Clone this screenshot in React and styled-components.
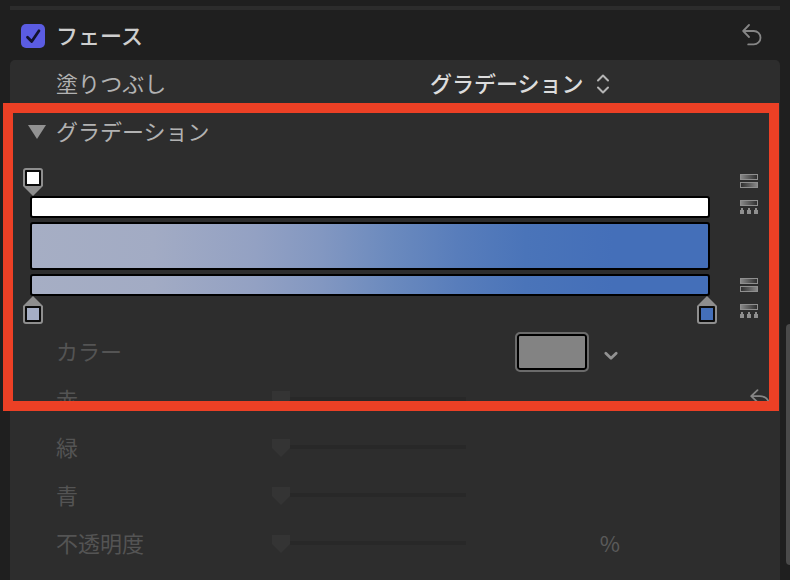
import { useState } from "react";
import styled, { createGlobalStyle } from "styled-components";

const CHANNELS = [
  { id: "green", label: "緑" },
  { id: "blue", label: "青" },
  { id: "opacity", label: "不透明度", unit: "%" },
];

export default function App() {
  const [faceOn, setFaceOn] = useState(true);
  const [fill, setFill] = useState("gradient");

  return (
    <>
      <GlobalStyle />
      <Inspector>
        <Divider />
        <Header>
          <CheckLabel>
            <CheckWrap>
              <Checkbox
                type="checkbox"
                checked={faceOn}
                onChange={(e) => setFaceOn(e.target.checked)}
              />
              {faceOn && <CheckMark />}
            </CheckWrap>
            <LabelText>フェース</LabelText>
          </CheckLabel>
          <IconButton aria-label="フェースをリセット">
            <ResetIcon />
          </IconButton>
        </Header>
        <Panel>
          <Row>
            <Label htmlFor="fill">塗りつぶし</Label>
            <Control $align="flex-end" $inset="8px">
              <SelectWrap>
                <Select
                  id="fill"
                  value={fill}
                  onChange={(e) => setFill(e.target.value)}
                >
                  <option value="gradient">グラデーション</option>
                </Select>
                <UpDownIcon />
              </SelectWrap>
            </Control>
          </Row>
          <Section>
            <Disclosure aria-expanded="true">
              <svg width="18" height="14" viewBox="0 0 18 14">
                <path d="M0 0h18L9 14z" fill="#929292" />
              </svg>
              <LabelText>グラデーション</LabelText>
            </Disclosure>
            <GradientEditor />
            <Row>
              <Label as="span" $dim>
                カラー
              </Label>
              <Control $align="flex-end" $gap="14px" $inset="1px">
                <Swatch aria-label="カラー" />
                <IconButton aria-label="カラーを展開">
                  <svg width="16" height="20" viewBox="0 0 16 20" fill="none">
                    <path
                      d="M2.8 11.3l5.2 5 5.2-5"
                      stroke="#929292"
                      strokeWidth="2.8"
                      strokeLinecap="round"
                      strokeLinejoin="round"
                    />
                  </svg>
                </IconButton>
              </Control>
            </Row>
            <ChannelRow id="red" label="赤">
              <IconButton aria-label="赤をリセット">
                <UndoIcon />
              </IconButton>
            </ChannelRow>
            <Highlight />
          </Section>
          {CHANNELS.map((channel) => (
            <ChannelRow key={channel.id} {...channel} />
          ))}
        </Panel>
        <ScrollThumb />
      </Inspector>
    </>
  );
}

function ChannelRow({ id, label, unit, children }) {
  return (
    <Row>
      <Label htmlFor={id} $dim>
        {label}
      </Label>
      <Control $align="space-between">
        <Slider id={id} type="range" min="0" max="100" defaultValue="0" disabled />
        {unit && <Unit>{unit}</Unit>}
      </Control>
      <Trailing>{children}</Trailing>
    </Row>
  );
}

function GradientEditor() {
  return (
    <Editor>
      <Tracks>
        <Stops>
          <Stop $color="#ffffff" aria-label="不透明度の分岐点" />
        </Stops>
        <Bar />
        <Bar $tall $gradient />
        <Bar $gradient />
        <Stops>
          <Stop $up $color="#a5aec5" aria-label="開始カラー" />
          <Stop $up $color="#446fb9" aria-label="終了カラー" />
        </Stops>
      </Tracks>
      <Tools>
        <ToolGroup>
          <IconButton aria-label="不透明度を反転">
            <ReverseIcon id="reverse-opacity" />
          </IconButton>
          <IconButton aria-label="不透明度を均等に配置">
            <DistributeIcon id="spread-opacity" />
          </IconButton>
        </ToolGroup>
        <ToolGroup>
          <IconButton aria-label="カラーを反転">
            <ReverseIcon id="reverse-color" />
          </IconButton>
          <IconButton aria-label="カラーを均等に配置">
            <DistributeIcon id="spread-color" />
          </IconButton>
        </ToolGroup>
      </Tools>
    </Editor>
  );
}

function CheckMark() {
  return (
    <svg width="24" height="24" viewBox="0 0 24 24" fill="none">
      <path
        d="M6.5 13.2l4.2 4.3L18 6.8"
        stroke="#13132e"
        strokeWidth="2.8"
        strokeLinecap="round"
        strokeLinejoin="round"
      />
    </svg>
  );
}

function ResetIcon() {
  return (
    <svg width="20" height="24" viewBox="0 0 20 24" fill="none">
      <path
        d="M7 1L1.2 7 7 13M1.5 7h10.3a6.7 6.7 0 0 1 0 13.4H6.2"
        stroke="#868686"
        strokeWidth="1.8"
        strokeLinecap="round"
        strokeLinejoin="round"
      />
    </svg>
  );
}

function UndoIcon() {
  return (
    <svg width="20" height="24" viewBox="0 0 20 24" fill="none">
      <path
        d="M7.5 2.2L1.2 8.2l6.3 6M1.5 8.2h8.3c4.6 0 8 2.2 9 6.6"
        stroke="#868686"
        strokeWidth="1.8"
        strokeLinecap="round"
        strokeLinejoin="round"
      />
    </svg>
  );
}

function UpDownIcon() {
  return (
    <svg width="14" height="20" viewBox="0 0 14 20" fill="none">
      <path
        d="M2 6.5l5-5 5 5M2 13.5l5 5 5-5"
        stroke="#b4b4b4"
        strokeWidth="2"
        strokeLinecap="round"
        strokeLinejoin="round"
      />
    </svg>
  );
}

function ReverseIcon({ id }) {
  return (
    <svg width="18" height="14" viewBox="0 0 18 14">
      <linearGradient id={`${id}-a`}>
        <stop offset="0" stopColor="#8a8a8a" />
        <stop offset="1" stopColor="#2d2d2d" />
      </linearGradient>
      <linearGradient id={`${id}-b`}>
        <stop offset="0" stopColor="#2d2d2d" />
        <stop offset="1" stopColor="#8a8a8a" />
      </linearGradient>
      <rect x="0.5" y="0.5" width="17" height="5" fill={`url(#${id}-a)`} stroke="#8f8f8f" />
      <rect x="0.5" y="8.5" width="17" height="5" fill={`url(#${id}-b)`} stroke="#8f8f8f" />
    </svg>
  );
}

function DistributeIcon({ id }) {
  return (
    <svg width="18" height="14" viewBox="0 0 18 14">
      <linearGradient id={id}>
        <stop offset="0" stopColor="#8a8a8a" />
        <stop offset="1" stopColor="#2d2d2d" />
      </linearGradient>
      <rect x="0.5" y="0.5" width="17" height="5" fill={`url(#${id})`} stroke="#8f8f8f" />
      <path
        d="M0 14v-4h1V8h2v2h1v4zM7 14v-4h1V8h2v2h1v4zM14 14v-4h1V8h2v2h1v4z"
        fill="#8f8f8f"
      />
    </svg>
  );
}

const GlobalStyle = createGlobalStyle`
  *,
  *::before {
    box-sizing: border-box;
  }
  body {
    margin: 0;
    background: #1f1f1f;
    color: #b2b2b2;
    font: 22px/32px "Noto Sans CJK JP", sans-serif;
  }
  svg {
    display: block;
  }
  button {
    margin: 0;
    padding: 0;
    border: 0;
    background: none;
    color: inherit;
    font: inherit;
  }
`;

const Inspector = styled.main`
  position: relative;
  display: flex;
  flex-direction: column;
  min-height: 100vh;
  padding: 6px 10px 0;
  overflow: hidden;
`;

const Divider = styled.div`
  height: 4px;
  background: #2c2c2c;
`;

const Header = styled.header`
  display: flex;
  align-items: center;
  justify-content: space-between;
  height: 50px;
  padding: 2px 18px 0 11px;
`;

const CheckLabel = styled.label`
  display: flex;
  align-items: center;
  gap: 11px;
  color: #cecece;
  font-weight: 500;
`;

const CheckWrap = styled.span`
  display: grid;
  > * {
    grid-area: 1 / 1;
  }
  svg {
    pointer-events: none;
  }
`;

const Checkbox = styled.input`
  appearance: none;
  width: 24px;
  height: 24px;
  margin: 0;
  border-radius: 5px;
  background: #3a3a3a;
  &:checked {
    background: #5b5ce2;
  }
`;

/* the CJK face sits low in its line box, the bottom padding centres it */
const LabelText = styled.span`
  padding-bottom: 4px;
`;

const IconButton = styled.button`
  display: flex;
`;

const Panel = styled.section`
  flex: 1;
  border-radius: 5px 5px 0 0;
  background: #2d2d2d;
`;

const Section = styled.div`
  position: relative;
`;

const Row = styled.div`
  display: grid;
  grid-template-columns: 216px 1fr 160px;
  align-items: center;
  height: 48px;
  padding-left: 46px;
`;

const Label = styled.label`
  padding-bottom: 4px;
  color: ${({ $dim }) => ($dim ? "#545454" : "inherit")};
`;

const Control = styled.div`
  display: flex;
  align-items: center;
  justify-content: ${({ $align }) => $align};
  gap: ${({ $gap }) => $gap || "0"};
  padding-right: ${({ $inset }) => $inset || "0"};
`;

const Trailing = styled.div`
  display: flex;
  justify-content: flex-end;
  padding-right: 10px;
`;

const SelectWrap = styled.div`
  display: grid;
  align-items: center;
  > * {
    grid-area: 1 / 1;
  }
  svg {
    justify-self: end;
    margin-right: 2px;
    pointer-events: none;
  }
`;

const Select = styled.select`
  appearance: none;
  margin: 0;
  padding: 0 27px 4px 0;
  border: 0;
  background: none;
  color: #dcdcdc;
  font: inherit;
  font-weight: 500;
`;

const Disclosure = styled.button`
  display: flex;
  align-items: center;
  gap: 10px;
  width: 100%;
  height: 48px;
  padding-left: 18px;
  text-align: left;
`;

const Editor = styled.div`
  display: grid;
  grid-template-columns: 1fr 18px;
  gap: 30px;
  padding: 12px 22px 4px 20px;
`;

const Tracks = styled.div`
  display: flex;
  flex-direction: column;
  gap: 4px;
`;

const Stops = styled.div`
  display: flex;
  justify-content: space-between;
  margin: 0 -7px;
  &:first-child {
    margin-bottom: -4px;
  }
  &:last-child {
    margin-top: -4px;
  }
`;

const Stop = styled.button`
  display: flex;
  justify-content: center;
  align-items: ${({ $up }) => ($up ? "flex-end" : "flex-start")};
  width: 20px;
  height: 28px;
  padding: 2px 0;
  border-radius: ${({ $up }) => ($up ? "0 0 3px 3px" : "3px 3px 0 0")};
  background: #8e8e8e;
  clip-path: ${({ $up }) =>
    $up
      ? "polygon(50% 0, 100% 10px, 100% 100%, 0 100%, 0 10px)"
      : "polygon(0 0, 100% 0, 100% 18px, 50% 100%, 0 18px)"};
  &::before {
    content: "";
    flex: none;
    width: 16px;
    height: 16px;
    border: 2px solid #0c0c0c;
    border-radius: 1px;
    background: ${({ $color }) => $color};
  }
`;

const Bar = styled.div`
  height: ${({ $tall }) => ($tall ? "48px" : "22px")};
  border: 2px solid #000;
  border-radius: 3px;
  background: ${({ $gradient }) =>
    $gradient
      ? "linear-gradient(90deg, #a6aec4, #a2abc4 18%, #93a1c3 33%, #8297c1 43%, #6b8abe 53%, #587dbb 63%, #4a74b9 73%, #446fb9 86%)"
      : "#fff"};
`;

const Tools = styled.div`
  display: flex;
  flex-direction: column;
  justify-content: space-between;
  padding: 6px 0;
`;

const ToolGroup = styled.div`
  display: flex;
  flex-direction: column;
  gap: 12px;
`;

const Swatch = styled.button`
  width: 74px;
  height: 40px;
  border: 2px solid #6b6b6b;
  border-radius: 5px;
  background: #838383;
  box-shadow: inset 0 0 0 2px #000;
`;

const Slider = styled.input`
  appearance: none;
  width: 194px;
  height: 18px;
  margin: 0;
  background: linear-gradient(#282828, #282828) 18px 6px / 176px 4px no-repeat;
  &::-webkit-slider-thumb {
    appearance: none;
    width: 18px;
    height: 18px;
    background: #343434;
    clip-path: polygon(0 0, 100% 0, 100% 50%, 50% 100%, 0 50%);
  }
`;

const Unit = styled.span`
  padding-bottom: 4px;
  color: #5a5a5a;
`;

/* call-out frame, drawn on top of the gradient controls */
const Highlight = styled.div`
  position: absolute;
  inset: -5px 1px 13px -7px;
  border: 10px solid #ec4025;
  pointer-events: none;
`;

const ScrollThumb = styled.div`
  position: absolute;
  top: 324px;
  right: -4px;
  width: 8px;
  height: 241px;
  border-radius: 4px;
  background: #4a4a4a;
`;
